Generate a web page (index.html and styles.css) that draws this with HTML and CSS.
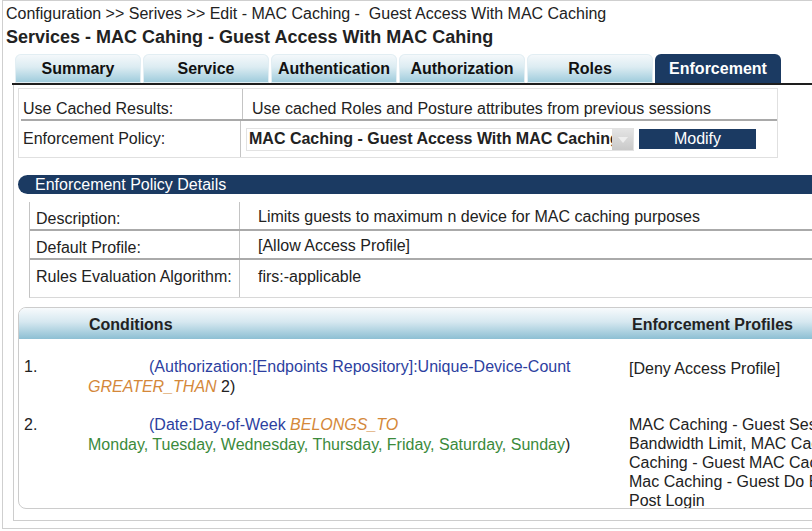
FILE: index.html
```html
<!DOCTYPE html>
<html>
<head>
  <title>Services - MAC Caching</title>
  <link rel="stylesheet" href="styles.css">
</head>
<body>

  <div class="page">

    <div class="crumbs">Configuration &gt;&gt; Serives &gt;&gt; Edit - MAC Caching - &nbsp;Guest Access With MAC Caching</div>
    <div class="title">Services - MAC Cahing - Guest Access With MAC Cahing</div>

    <div class="tabs">
      <div class="tab">Summary</div>
      <div class="tab">Service</div>
      <div class="tab">Authentication</div>
      <div class="tab">Authorization</div>
      <div class="tab">Roles</div>
      <div class="tab active">Enforcement</div>
    </div>

    <div class="content">

      <div class="cache-box">
        <div class="cache-row first">
          <div class="label">Use Cached Results:</div>
          <div class="value">Use cached Roles and Posture attributes from previous sessions</div>
        </div>
        <div class="cache-row">
          <div class="label">Enforcement Policy:</div>
          <div class="value policy">
            <div class="select">
              <span class="select-text">MAC Caching - Guest Access With MAC Caching</span>
              <span class="select-arrow"></span>
            </div>
            <div class="btn">Modify</div>
          </div>
        </div>
      </div>

      <div class="section-head">Enforcement Policy Details</div>

      <div class="details">
        <div class="d-row">
          <div class="d-label">Description:</div>
          <div class="d-value">Limits guests to maximum n device for MAC caching purposes</div>
        </div>
        <div class="d-row">
          <div class="d-label">Default Profile:</div>
          <div class="d-value">[Allow Access Profile]</div>
        </div>
        <div class="d-row last">
          <div class="d-label">Rules Evaluation Algorithm:</div>
          <div class="d-value">firs:-applicable</div>
        </div>
      </div>

      <div class="rules">
        <div class="rules-head">
          <div></div>
          <div>Conditions</div>
          <div>Enforcement Profiles</div>
        </div>
        <div class="rule">
          <div class="num">1.</div>
          <div class="cond"><span class="attr">(Authorization:[Endpoints Repository]:Unique-Device-Count</span><br><span class="op">GREATER_THAN</span> 2)</div>
          <div class="prof first">[Deny Access Profile]</div>
        </div>
        <div class="rule">
          <div class="num">2.</div>
          <div class="cond"><span class="attr">(Date:Day-of-Week</span> <span class="op">BELONGS_TO</span><br><span class="val">Monday, Tuesday, Wednesday, Thursday, Friday, Saturday, Sunday</span>)</div>
          <div class="prof">MAC Caching - Guest Session Timeout, MAC Caching -<br>Bandwidth Limit, MAC Caching - Guest Expire Post Login, MAC<br>Caching - Guest MAC Caching,<br>Mac Caching - Guest Do Expire,<br>Post Login</div>
        </div>
      </div>

    </div>

  </div>

</body>
</html>
```

FILE: styles.css
```css
html, body {
  margin: 0;
  overflow: hidden;
}

body {
  font-family: "Liberation Sans", Arial, sans-serif;
  font-size: 16px;
  color: #222;
  background: #fff;
}

.page {
  width: 1000px;
  margin-left: 2px;
  border: 1px solid #cfcfcf;
  border-right: none;
  padding-bottom: 7px;
}

.crumbs {
  padding: 4px 0 0 3px;
  line-height: 18px;
}

.title {
  font-weight: bold;
  font-size: 18px;
  line-height: 20px;
  padding-left: 3px;
  margin-top: 4px;
}

/* tab strip */
.tabs {
  display: flex;
  gap: 2px;
  margin: 7px 0 0 9px;
  padding-left: 3px;
  border-bottom: 2px solid #1e1e1e;
}

.tab {
  width: 126px;
  height: 29px;
  line-height: 29px;
  text-align: center;
  font-weight: bold;
  font-size: 16px;
  color: #111;
  border-radius: 6px 6px 0 0;
  background: linear-gradient(#f6f9fb, #dcecf2 45%, #9ccadb);
  box-shadow: inset 0 0 0 1px #e2eef3;
  white-space: nowrap;
}

.tab.active {
  background: #1b3a62;
  color: #fff;
  box-shadow: none;
}

.content {
  margin-left: 10px;
  border-left: 1px solid #cdcdcd;
  border-bottom: 1px solid #cdcdcd;
  padding: 3px 0 11px 4px;
}

/* cached results box */
.cache-box {
  width: 758px;
  border: 1px solid #e0e0e0;
}

.cache-row {
  display: grid;
  grid-template-columns: 222px 1fr;
  height: 36px;
}

.cache-row.first {
  height: 30px;
  border-bottom: 2px solid #a9a9a9;
  margin-left: 2px;
}

.cache-row.first .label {
  padding-left: 2px;
}

.label {
  padding-left: 4px;
  display: flex;
  align-items: center;
  border-right: 1px solid #c4c4c4;
}

.value {
  padding-left: 9px;
  display: flex;
  align-items: center;
  white-space: nowrap;
}

.cache-row.first .label,
.cache-row.first .value {
  padding-top: 9px;
}

.value.policy {
  padding-left: 5px;
  gap: 5px;
}

.select {
  width: 386px;
  height: 21px;
  border: 1px solid #e2e2e2;
  display: flex;
  align-items: center;
  overflow: hidden;
}

.select-text {
  flex: 1;
  font-weight: bold;
  white-space: nowrap;
  overflow: hidden;
  padding-left: 2px;
}

.select-arrow {
  width: 21px;
  height: 21px;
  position: relative;
  background: linear-gradient(#e4e4e4, #c9c9c9);
}

.select-arrow::after {
  content: "";
  position: absolute;
  left: 6px;
  top: 8px;
  border-left: 5px solid transparent;
  border-right: 5px solid transparent;
  border-top: 6px solid #eeeeee;
}

.btn {
  width: 117px;
  height: 20px;
  line-height: 20px;
  text-align: center;
  background: #1b3a62;
  color: #fff;
}

/* policy details */
.section-head {
  margin-top: 17px;
  height: 19px;
  line-height: 19px;
  padding-left: 17px;
  background: #1b3a62;
  color: #fff;
  border-radius: 10px 0 0 10px;
}

.details {
  margin: 8px 0 0 11px;
  border-left: 1px solid #c4c4c4;
  border-bottom: 1px solid #d8d8d8;
}

.d-row {
  display: grid;
  grid-template-columns: 210px 1fr;
  height: 27px;
  border-bottom: 2px solid #aaaaaa;
}

.d-row.last {
  height: 37px;
  border-bottom: none;
}

.d-label {
  padding: 8px 0 0 6px;
  border-right: 1px solid #c4c4c4;
  white-space: nowrap;
}

.d-value {
  padding: 6px 0 0 18px;
}

.d-row.last .d-value,
.d-row.last .d-label {
  padding-top: 8px;
}

/* rules table */
.rules {
  margin-top: 9px;
  height: 200px;
  border: 1px solid #cccccc;
  border-radius: 8px 0 0 8px;
  overflow: hidden;
}

.rules-head,
.rule {
  display: grid;
  grid-template-columns: 69px 541px 1fr;
}

.rules-head {
  height: 31px;
  line-height: 34px;
  font-weight: bold;
  background: linear-gradient(#f7fafc, #d6e8f0 45%, #8dbfd3);
}

.rules-head div:nth-child(2) {
  padding-left: 1px;
}

.rules-head div:nth-child(3) {
  padding-left: 3px;
}

.rule {
  line-height: 20px;
  padding-top: 18px;
}

.rule + .rule {
  padding-top: 18px;
}

.num {
  padding-left: 5px;
}

.cond {
  text-indent: 61px;
}

.cond .val {
  text-indent: 0;
}

.attr {
  color: #2d3f9f;
}

.op {
  color: #d4883a;
  font-style: italic;
}

.val {
  color: #3b8a3b;
}

.prof {
  line-height: 19px;
  white-space: nowrap;
}

.prof.first {
  padding-top: 2px;
}
```
